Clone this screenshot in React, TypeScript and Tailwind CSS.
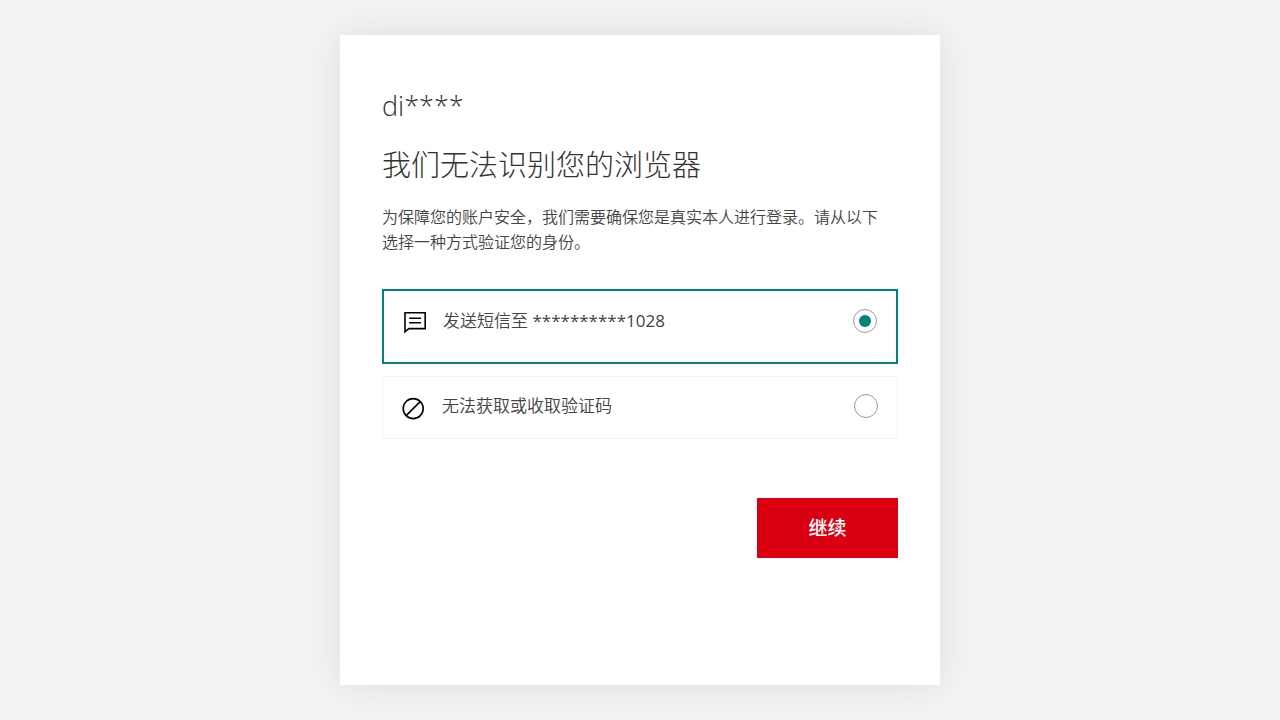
import { FormEvent, ReactNode, useState } from 'react';
import clsx from 'clsx';

type Option = {
  id: string;
  label: string;
  target?: string;
  icon: ReactNode;
};

const MessageIcon = () => (
  <svg viewBox="0 0 24 24" className="w-6 h-6" fill="none" stroke="currentColor" strokeWidth="1.6" aria-hidden="true">
    <path d="M2 1.8h20.2v15.8H5.8L2 20.8z" />
    <path d="M6.2 7.2h11.8M6.2 11.8h11.8" />
  </svg>
);

const BlockedIcon = () => (
  <svg viewBox="0 0 24 24" className="w-6 h-6" fill="none" stroke="currentColor" strokeWidth="1.6" aria-hidden="true">
    <circle cx="11.2" cy="12.6" r="10" />
    <path d="M4.2 19.6L18.2 5.6" />
  </svg>
);

const options: Option[] = [
  { id: 'sms', label: '发送短信至', target: '**********1028', icon: <MessageIcon /> },
  { id: 'unavailable', label: '无法获取或收取验证码', icon: <BlockedIcon /> },
];

const App = () => {
  const [selected, setSelected] = useState('sms');

  const handleSubmit = (e: FormEvent) => {
    e.preventDefault();
  };

  return (
    <div className="flex justify-center items-center px-4 py-8 min-h-screen font-['Open_Sans','Noto_Sans_CJK_SC',sans-serif] text-[#333] bg-[#f3f3f3]">
      <main className="px-[42px] pt-[50px] pb-[127px] w-full max-w-[600px] bg-white shadow-[0_0_36px_rgba(0,0,0,0.09)]">
        <p className="text-[27px] font-light leading-[42px]">di****</p>
        <h1 className="mt-4 text-[29px] font-light leading-[44px]">我们无法识别您的浏览器</h1>

        <p className="mt-[18px] text-base font-[350] leading-[25px] text-[#444]">
          为保障您的账户安全，我们需要确保您是真实本人进行登录。请从以下
          <br />
          选择一种方式验证您的身份。
        </p>

        <form onSubmit={handleSubmit}>
          {/* 验证方式 */}
          <div className="grid gap-3 mt-[34px]">
            {options.map((option) => {
              const active = option.id === selected;
              return (
                <label
                  key={option.id}
                  htmlFor={option.id}
                  className={clsx(
                    'flex items-start px-[19px] cursor-pointer',
                    active ? 'pt-[18px] pb-[27px] border-2 border-[#00847f]' : 'pt-[17px] pb-[18px] border border-[#f3f3f3]'
                  )}
                >
                  <span className="mt-[2px] text-black">{option.icon}</span>
                  <span className="flex-1 ml-4 text-[17px] font-[350] leading-6 text-[#444]">
                    {option.label}
                    {option.target && <span className="font-normal"> {option.target}</span>}
                  </span>
                  <input
                    type="radio"
                    id={option.id}
                    name="method"
                    checked={active}
                    onChange={() => setSelected(option.id)}
                    className="grid place-items-center w-6 h-6 rounded-full border border-[#999] appearance-none cursor-pointer checked:before:w-3 checked:before:h-3 checked:before:bg-[#00847f] checked:before:rounded-full checked:before:content-['']"
                  />
                </label>
              );
            })}
          </div>

          <div className="flex justify-end mt-[59px]">
            <button
              type="submit"
              className="w-[141px] h-[60px] text-[19px] font-medium text-white bg-[#db0011] hover:bg-[#a8000b] cursor-pointer"
            >
              继续
            </button>
          </div>
        </form>
      </main>
    </div>
  );
};

export default App;
